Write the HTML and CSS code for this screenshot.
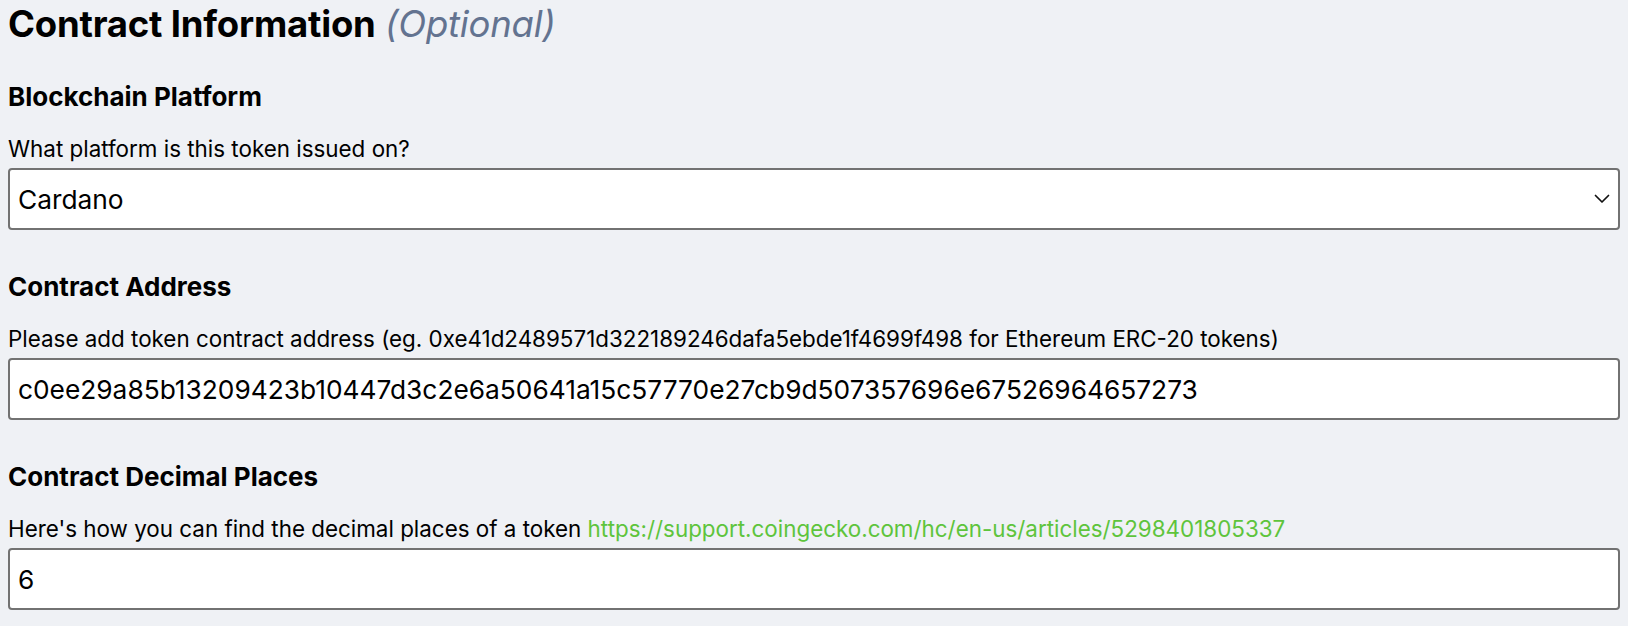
FILE: index.html
```html
<!DOCTYPE html>
<html lang="en">
<head>
<meta charset="utf-8">
<title>Contract Information</title>
<link rel="stylesheet" href="styles.css">
</head>
<body>
<div class="form">
  <h2 class="title">Contract Information <span class="optional">(Optional)</span></h2>

  <div class="field">
    <div class="label">Blockchain Platform</div>
    <div class="help">What platform is this token issued on?</div>
    <div class="select">
      <span class="value">Cardano</span>
      <svg class="chevron" width="16" height="10" viewBox="0 0 16 10"><path d="M1.5 1.5 L8 8 L14.5 1.5" fill="none" stroke="#111" stroke-width="1.7" stroke-linecap="round" stroke-linejoin="round"/></svg>
    </div>
  </div>

  <div class="field">
    <div class="label">Contract Address</div>
    <div class="help">Please add token contract address (eg. 0xe41d2489571d322189246dafa5ebde1f4699f498 for Ethereum ERC-20 tokens)</div>
    <div class="input"><span class="value">c0ee29a85b13209423b10447d3c2e6a50641a15c57770e27cb9d507357696e67526964657273</span></div>
  </div>

  <div class="field">
    <div class="label">Contract Decimal Places</div>
    <div class="help">Here's how you can find the decimal places of a token <a class="link" href="#">https://support.coingecko.com/hc/en-us/articles/5298401805337</a></div>
    <div class="input"><span class="value">6</span></div>
  </div>
</div>
</body>
</html>
```

FILE: styles.css
```css
html, body {
  margin: 0;
  padding: 0;
}
body {
  background: #eff1f5;
  font-family: Inter, "Noto Sans", sans-serif;
  color: #000;
  padding: 8px;
}
.form {
  display: flex;
  flex-direction: column;
  gap: 43px;
}
.title {
  margin: 0;
  font-size: 36.5px;
  line-height: 32px;
  font-weight: 700;
  letter-spacing: -0.2px;
}
.optional {
  font-weight: 400;
  font-style: italic;
  color: #637390;
  margin-left: 1px;
}
.field {
  display: flex;
  flex-direction: column;
}
.label {
  font-size: 26px;
  line-height: 28px;
  font-weight: 700;
}
.help {
  margin-top: 26px;
  font-size: 22.4px;
  line-height: 24px;
}
.link {
  color: #5ec43c;
  text-decoration: none;
}
.select, .input {
  margin-top: 7px;
  height: 62px;
  box-sizing: border-box;
  border: 2px solid #727272;
  border-radius: 4px;
  background: #fff;
  display: flex;
  align-items: center;
  padding: 0 8px;
  font-size: 26.3px;
}
.select {
  justify-content: space-between;
}
```
